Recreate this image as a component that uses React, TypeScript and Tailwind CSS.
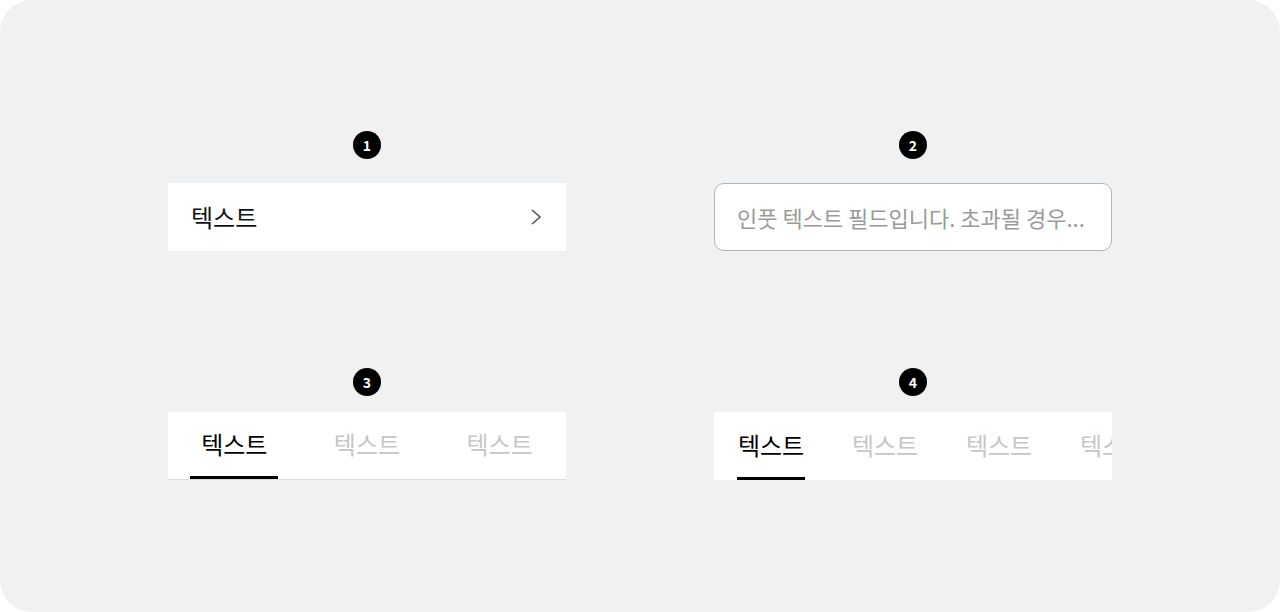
import React, { useState } from "react";

const font = { fontFamily: '"Noto Sans CJK KR", "Noto Sans", sans-serif' };

const Badge = ({ n }: { n: number }) => (
  <div className="flex h-[28px] w-[28px] items-center justify-center rounded-full bg-black text-[14px] font-bold text-white">
    {n}
  </div>
);

const App = () => {
  const [active3, setActive3] = useState(0);
  const [active4, setActive4] = useState(0);
  const tabs3 = ["텍스트", "텍스트", "텍스트"];
  const tabs4 = ["텍스트", "텍스트", "텍스트", "텍스트"];

  return (
    <div className="h-[612px] w-full bg-white" style={font}>
      <div className="grid h-full w-full grid-cols-[398px_398px] content-start justify-center gap-x-[148px] gap-y-[117px] rounded-[32px] bg-[#f0f1f3] pt-[131px]">
        {/* 1 */}
        <div className="flex flex-col items-center gap-[24px]">
          <Badge n={1} />
          <div className="flex h-[68px] w-full items-center justify-between bg-white pl-[23px] pr-[22px]">
            <span className="text-[24px] leading-none text-[#111]">텍스트</span>
            <svg width="16" height="18" viewBox="0 0 16 18" fill="none">
              <path d="M4 2l8 7-8 7" stroke="#555" strokeWidth="1.6" />
            </svg>
          </div>
        </div>

        {/* 2 */}
        <div className="flex flex-col items-center gap-[24px]">
          <Badge n={2} />
          <div className="flex h-[68px] w-full items-center overflow-hidden rounded-[10px] border border-[#b5b5b5] bg-white px-[22px]">
            <span className="whitespace-nowrap text-[22px] leading-none text-[#9a9a9a]">
              인풋 텍스트 필드입니다. 초과될 경우...
            </span>
          </div>
        </div>

        {/* 3 */}
        <div className="flex flex-col items-center gap-[16px]">
          <Badge n={3} />
          <div className="grid h-[68px] w-full grid-cols-3 border-b border-[#dcdcdc] bg-white">
            {tabs3.map((t, i) => (
              <button
                key={i}
                type="button"
                onClick={() => setActive3(i)}
                className="flex flex-col items-center justify-between"
              >
                <span
                  className={`flex flex-1 items-center text-[24px] leading-none ${
                    i === active3 ? "text-black" : "text-[#c6c6c6]"
                  }`}
                >
                  {t}
                </span>
                <span
                  className={`h-[3px] w-[88px] ${i === active3 ? "bg-black" : "bg-transparent"}`}
                />
              </button>
            ))}
          </div>
        </div>

        {/* 4 */}
        <div className="flex flex-col items-center gap-[16px]">
          <Badge n={4} />
          <div className="flex h-[68px] w-full gap-[46px] overflow-hidden bg-white pl-[23px]">
            {tabs4.map((t, i) => (
              <button
                key={i}
                type="button"
                onClick={() => setActive4(i)}
                className="flex w-[68px] shrink-0 flex-col items-center justify-between"
              >
                <span
                  className={`flex flex-1 items-center whitespace-nowrap text-[24px] leading-none ${
                    i === active4 ? "text-black" : "text-[#c6c6c6]"
                  }`}
                >
                  {t}
                </span>
                <span
                  className={`h-[3px] w-[68px] ${i === active4 ? "bg-black" : "bg-transparent"}`}
                />
              </button>
            ))}
          </div>
        </div>
      </div>
    </div>
  );
};

export default App;
